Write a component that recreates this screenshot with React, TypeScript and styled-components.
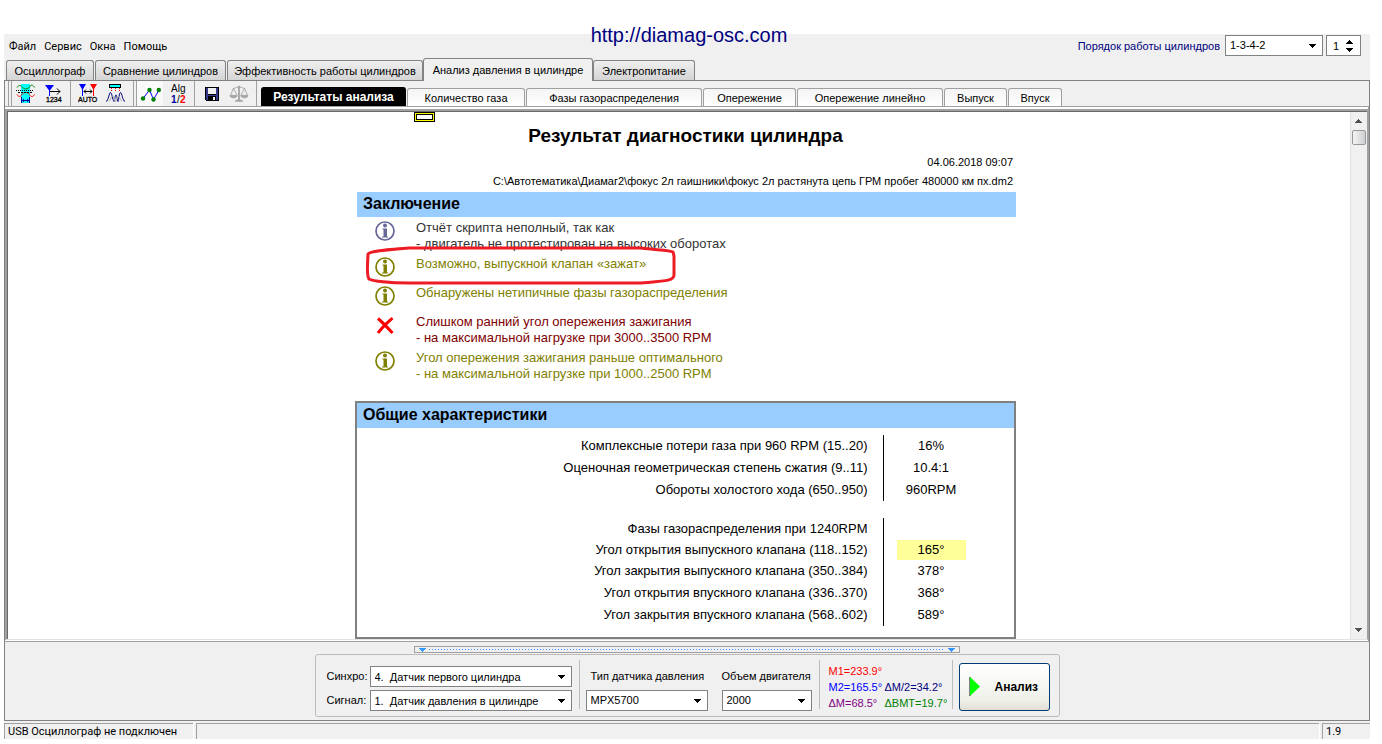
import React from "react";
import styled, { createGlobalStyle, css } from "styled-components";

const SANS = `"Liberation Sans", Arial, sans-serif`;
const UI = `Roboto, sans-serif`;

const GlobalStyle = createGlobalStyle`
  *, *::before, *::after { box-sizing: border-box; }
  body { margin: 0; background: #fff; color: #000; font-family: ${SANS}; font-size: 11px; }
  button, select, input { font: inherit; color: inherit; }
  button { cursor: pointer; }
  svg { display: block; flex: none; }
`;

const Page = styled.div`
  position: relative;
  min-height: 100vh;
  display: flex;
  flex-direction: column;
  padding: 34px 12px 5px 4px;
`;

const SiteLink = styled.a`
  position: absolute;
  top: 24px;
  left: 0;
  right: 4px;
  margin: 0 auto;
  width: fit-content;
  font-size: 20px;
  line-height: 22px;
  color: #000080;
  text-decoration: none;
`;

const Window = styled.div`
  flex: 1;
  display: flex;
  flex-direction: column;
  background: #f0f0f0;
`;

const TopRow = styled.header`
  display: flex;
  justify-content: space-between;
  height: 24px;
  padding: 0 9px 0 5px;
`;

const Menu = styled.nav`
  display: flex;
  gap: 8px;
  font-family: ${UI};
  font-size: 11px;
  line-height: 26px;
`;

const MenuItem = styled.button`
  border: 0;
  padding: 0;
  background: none;
`;

const Order = styled.div`
  display: flex;
  gap: 3px;
  padding-top: 1px;
`;

const OrderLabel = styled.label`
  color: #000080;
  line-height: 22px;
  margin-right: 2px;
`;

const SelectBox = styled.div<{ $w: number }>`
  position: relative;
  width: ${(p) => p.$w}px;
  height: 21px;
  svg { position: absolute; right: 7px; top: 9px; pointer-events: none; }
`;

const NativeSelect = styled.select`
  appearance: none;
  display: block;
  width: 100%;
  height: 21px;
  padding: 0 18px 2px 4px;
  border: 1px solid #828282;
  border-radius: 0;
  background: #fff;
`;

const Spin = styled.div`
  display: flex;
  align-items: center;
  width: 35px;
  height: 21px;
  border: 1px solid #828282;
  background: #fff;
`;

const SpinInput = styled.input`
  width: 19px;
  height: 17px;
  padding: 0 0 0 6px;
  border: 0;
  background: none;
`;

const SpinArrows = styled.div`
  display: flex;
  flex-direction: column;
  gap: 4px;
`;

const SpinButton = styled.button`
  border: 0;
  padding: 0;
  background: none;
`;

const MainTabs = styled.div`
  display: flex;
  align-items: flex-end;
  height: 22px;
  padding-left: 2px;
`;

const MainTab = styled.button<{ $w: number; $active?: boolean }>`
  width: ${(p) => p.$w}px;
  height: 20px;
  padding: 0;
  border: 1px solid #828282;
  border-bottom: 0;
  border-radius: 3px 3px 0 0;
  background: linear-gradient(#f0f0f0, #d4d4d4);
  white-space: nowrap;
  margin-right: 1px;
  ${(p) =>
    p.$active &&
    css`
      position: relative;
      height: 23px;
      margin: 0 0 -1px -1px;
      background: #f0f0f0;
    `}
`;

const Panel = styled.main`
  flex: 1;
  display: flex;
  flex-direction: column;
  border: 1px solid #828282;
`;

const ToolRow = styled.div`
  display: flex;
  height: 25px;
`;

const Tools = styled.div`
  display: flex;
  align-items: center;
  width: 256px;
`;

const Divider = styled.i<{ $double?: boolean }>`
  flex: none;
  width: ${(p) => (p.$double ? 4 : 1)}px;
  height: 25px;
  border-left: 1px solid #a0a0a0;
  ${(p) => p.$double && "border-right: 1px solid #a0a0a0;"}
`;

const Space = styled.span<{ $w: number }>`
  flex: none;
  width: ${(p) => p.$w}px;
`;

const ToolButton = styled.button<{ $w: number; $on?: boolean }>`
  display: flex;
  flex: none;
  align-items: center;
  justify-content: center;
  width: ${(p) => p.$w}px;
  height: 25px;
  padding: 0;
  border: 0;
  background: ${(p) => (p.$on ? "#f9f9f9" : "none")};
`;

const SubTabs = styled.div`
  display: flex;
  align-items: flex-end;
  gap: 1px;
`;

const SubTab = styled.button<{ $w: number; $active?: boolean }>`
  width: ${(p) => p.$w}px;
  height: 18px;
  padding: 0;
  border: 1px solid #a0a0a0;
  border-bottom: 0;
  border-radius: 3px 3px 0 0;
  background: linear-gradient(#f4f4f4, #fff);
  white-space: nowrap;
  ${(p) =>
    p.$active &&
    css`
      height: 19px;
      border-color: #000;
      background: #000;
      color: #fff;
      font-size: 12px;
      font-weight: bold;
    `}
`;

const Sheet = styled.div`
  flex: 1;
  display: flex;
  flex-direction: column;
  border: 1px solid #a0a0a0;
  border-width: 1px 1px 1px 0;
  padding-top: 2px;
  background: #fff;
`;

const Viewport = styled.div`
  flex: 1;
  display: flex;
  border: 2px solid #a0a0a0;
  border-width: 2px 1px 1px 2px;
  border-bottom-color: #e3e3e3;
  box-shadow: inset 1px 1px 0 #696969;
  margin-bottom: 1px;
`;

const Scroll = styled.div`
  flex: 1;
  display: flex;
  justify-content: center;
  padding: 1px 0 0 14px;
`;

const ScrollBar = styled.div`
  display: flex;
  flex-direction: column;
  align-items: center;
  width: 17px;
  margin-top: 1px;
  background: #f0f0f0;
  border-left: 1px solid #e3e3e3;
`;

const ScrollArrow = styled.button`
  width: 16px;
  height: 18px;
  padding: 0 0 0 4px;
  border: 0;
  background: none;
`;

const Thumb = styled.div`
  width: 14px;
  height: 15px;
  margin-bottom: auto;
  border: 1px solid #979797;
  border-radius: 2px;
  background: linear-gradient(90deg, #f5f5f5, #cdcfd2);
`;

const Report = styled.article`
  position: relative;
  width: 661px;
`;

const Marker = styled.div`
  width: 21px;
  height: 10px;
  margin-left: 59px;
  border: 1px solid #000;
  background: #fff;
  box-shadow: inset 0 0 0 1px #ffff00, inset 0 0 0 2px #000;
`;

const Title = styled.h1`
  margin: 2px 0 6px;
  font-size: 19px;
  line-height: 24px;
  text-align: center;
`;

const Meta = styled.p`
  margin: 0 3px 3px 0;
  line-height: 16px;
  text-align: right;
`;

const SectionTitle = styled.h2`
  margin: 0;
  padding-left: 6px;
  background: #99ccff;
  font-size: 16px;
  line-height: 23px;
  height: 25px;
`;

const Conclusion = styled.section`
  padding-left: 2px;
`;

const Findings = styled.ul`
  display: flex;
  flex-direction: column;
  gap: 4px;
  margin: 3px 0 19px;
  padding: 0;
  list-style: none;
`;

const Finding = styled.li<{ $color: string }>`
  display: flex;
  gap: 21px;
  min-height: 25px;
  padding-left: 18px;
  color: ${(p) => p.$color};
  font-size: 13px;
  line-height: 16px;
  svg { margin-top: 1px; }
`;

const Outline = styled.svg`
  position: absolute;
  left: 10px;
  top: 134px;
  pointer-events: none;
`;

const General = styled.section`
  border: 2px solid #808080;
`;

const Params = styled.table`
  width: 100%;
  margin: 7px 0 11px;
  border-collapse: collapse;
  font-size: 13px;
`;

const ParamRow = styled.tr<{ $short?: boolean }>`
  height: ${(p) => (p.$short ? 20 : 22)}px;
`;

const SpacerRow = styled.tr`
  height: 17px;
`;

const ParamName = styled.th`
  padding: 0 15px 0 0;
  text-align: right;
  font-weight: normal;
  line-height: 20px;
`;

const ParamValue = styled.td`
  width: 131px;
  padding: 0 0 0 13px;
  border-left: 1px solid #000;
  line-height: 20px;
`;

const Value = styled.span<{ $mark?: boolean }>`
  display: block;
  width: 69px;
  min-height: 20px;
  text-align: center;
  background: ${(p) => (p.$mark ? "#ffff99" : "none")};
`;

const Bottom = styled.footer`
  display: flex;
  flex-direction: column;
  align-items: center;
  gap: 1px;
  padding: 4px 0 3px;
`;

const Splitter = styled.div`
  display: flex;
  align-items: center;
  gap: 3px;
  width: 546px;
  height: 7px;
  padding: 0 4px;
  border: 1px solid #a0a0a0;
`;

const Dots = styled.div`
  flex: 1;
  height: 1px;
  background: repeating-linear-gradient(90deg, #3399ff 0 1px, transparent 1px 3px);
`;

const Controls = styled.div`
  display: flex;
  height: 63px;
  padding: 5px 9px 0 11px;
  border: 1px solid #bcbcbc;
  border-radius: 3px;
`;

const Rule = styled.i`
  width: 1px;
  height: 49px;
  background: #bcbcbc;
`;

const Channels = styled.div`
  display: grid;
  grid-template-columns: 43px 202px;
  align-content: start;
  row-gap: 3px;
  padding: 6px 7px 0 0;
  line-height: 21px;
`;

const Field = styled.div`
  display: flex;
  flex-direction: column;
  gap: 3px;
  padding: 6px 0 0 6px;
  label { line-height: 21px; padding-left: 5px; white-space: nowrap; }
  & + & { padding: 6px 7px 0 14px; }
  & + & label { padding-left: 0; width: 90px; }
`;

const Readings = styled.dl`
  display: grid;
  grid-template-columns: 56px 67px;
  align-content: start;
  margin: 0;
  padding: 3px 0 0 9px;
  line-height: 16px;
`;

const Reading = styled.dd<{ $color: string; $wide?: boolean }>`
  margin: 0;
  color: ${(p) => p.$color};
  ${(p) => p.$wide && "grid-column: span 2;"}
`;

const RunButton = styled.button`
  display: flex;
  align-items: center;
  gap: 15px;
  width: 91px;
  height: 48px;
  margin: 3px 0 0 6px;
  padding: 0 0 0 9px;
  border: 1px solid #003c74;
  border-radius: 3px;
  background: linear-gradient(#fff, #f0f0ea 80%, #e0ddd3);
  font-size: 12px;
  font-weight: bold;
`;

const StatusBar = styled.div`
  display: flex;
  gap: 3px;
  margin-top: 2px;
  font-family: ${UI};
`;

const StatusCell = styled.div<{ $w?: number }>`
  flex: ${(p) => (p.$w ? `0 0 ${p.$w}px` : "1")};
  height: 16px;
  padding-left: 3px;
  border: 1px solid #a0a0a0;
  border-width: 1px 0 0 1px;
  box-shadow: 1px 0 0 #fff;
  line-height: 16px;
`;

const Down = ({ fill = "#000" }: { fill?: string }) => (
  <svg width="7" height="4" viewBox="0 0 7 4" shapeRendering="crispEdges">
    <path d="M0 0H7V1H6V2H5V3H4V4H3V3H2V2H1V1H0Z" fill={fill} />
  </svg>
);

const Up = ({ fill = "#000" }: { fill?: string }) => (
  <svg width="7" height="4" viewBox="0 0 7 4" shapeRendering="crispEdges">
    <path d="M0 4H7V3H6V2H5V1H4V0H3V1H2V2H1V3H0Z" fill={fill} />
  </svg>
);

const Combo = ({ id, w, value }: { id: string; w: number; value: string }) => (
  <SelectBox $w={w}>
    <NativeSelect id={id} defaultValue={value}>
      <option value={value}>{value}</option>
    </NativeSelect>
    <Down />
  </SelectBox>
);

const PhaseIcon = () => (
  <svg width="20" height="20" viewBox="0 0 20 20" fill="none">
    <rect x="5" y="0" width="9" height="19" fill="#00ffff" />
    <path d="M1 3.500C2.500 1 4.500 1 6 3S12 6 13.500 3 17 1 18.500 3.500" stroke="#008000" />
    <path d="M1 10.500C2.500 13 4.500 13 6 10.500S12 7.500 13.500 10.500 17 13 18.500 10.500" stroke="#ff0000" />
    <path d="M0 6.500H18" stroke="#000" strokeDasharray="1 1" shapeRendering="crispEdges" />
    <path d="M2 8.500H17" stroke="#000" strokeDasharray="2 1" shapeRendering="crispEdges" />
    <path d="M5 16.500H14M5.500 13V19M13.500 13V19" stroke="#0000a0" shapeRendering="crispEdges" />
    <path d="M6 16.500L8 14.500V18.500ZM13 16.500L11 14.500V18.500Z" fill="#0000a0" />
  </svg>
);

const tiny = { fontFamily: "Liberation Sans, sans-serif", fontSize: 7, stroke: "#000", strokeWidth: 0.3 };

const CountIcon = () => (
  <svg width="20" height="20" viewBox="0 0 20 20">
    <path d="M0 1H9L4.500 7Z" fill="#0000ff" />
    <path d="M4.500 4V12" stroke="#0000ff" />
    <path d="M5 7.500H15M12 4.500L15 7.500L12 10.500" fill="none" stroke="#000" />
    <text x="1" y="18" {...tiny}>1234</text>
  </svg>
);

const AutoIcon = () => (
  <svg width="20" height="20" viewBox="0 0 20 20">
    <path d="M1 0H8L4.500 6Z" fill="#0000ff" />
    <path d="M4.500 4V12" stroke="#0000ff" />
    <path d="M12 0H19L15.500 6Z" fill="#ff0000" />
    <path d="M15.500 4V12" stroke="#ff0000" />
    <path d="M6 7.500H14M8 5.500L6 7.500L8 9.500M12 5.500L14 7.500L12 9.500" fill="none" stroke="#000" />
    <text x="0" y="18" {...tiny}>АUТО</text>
  </svg>
);

const WaveIcon = () => (
  <svg width="20" height="20" viewBox="0 0 20 20" fill="none">
    <rect x="3.500" y="0.500" width="11" height="3" fill="#00ffff" stroke="#000" />
    <path d="M5.500 4V8M9.500 4V8M13.500 4V8" stroke="#ff0000" strokeDasharray="1 1" />
    <path d="M0 17.500C2.500 17 3 8.500 4.500 8.500S6.500 16 8 17.500C9 16 9 11 10 11S11 16 12 17.500C13 16 13 8.500 14.500 8.500S16.500 17 19 17.500" stroke="#000080" />
    <path d="M3 17.500C5 16 5 12 6.500 12S8 16 9.500 17.500C11 16 11 12 12.500 12S14 16 16 17.500" stroke="#b0b0b0" />
  </svg>
);

const GraphIcon = () => (
  <svg width="22" height="20" viewBox="0 0 22 20">
    <path d="M4 14.500L10.500 6L14.500 15.500L20 6" fill="none" stroke="#0000ff" />
    <g fill="#008000">
      <circle cx="4" cy="14.500" r="2.200" />
      <circle cx="10.500" cy="6" r="2.200" />
      <circle cx="14.500" cy="15.500" r="2.200" />
      <circle cx="19.800" cy="6" r="2.200" />
    </g>
  </svg>
);

const AlgIcon = () => (
  <svg width="18" height="22" viewBox="0 0 18 22" fontFamily="Liberation Sans, sans-serif" fontSize="10">
    <text x="1" y="9">Alg</text>
    <text x="1" y="20" fontWeight="bold" fill="#0000a0">1</text>
    <text x="7" y="20">/</text>
    <text x="10" y="20" fontWeight="bold" fill="#ff0000">2</text>
  </svg>
);

const DiskIcon = () => (
  <svg width="16" height="16" viewBox="0 0 16 16" shapeRendering="crispEdges">
    <path d="M1 1H15V15H2L1 14Z" fill="#000" />
    <path d="M2 2H4V9H12V2H14V14H2Z" fill="#3c3c8c" />
    <rect x="4" y="2" width="8" height="6" fill="#f0f0f0" />
    <rect x="4" y="10" width="8" height="4" fill="#000" />
    <rect x="9" y="11" width="2" height="3" fill="#f0f0f0" />
  </svg>
);

const ScalesIcon = () => (
  <svg width="20" height="20" viewBox="0 0 22 20" fill="none" stroke="#a4a4a4">
    <path d="M11 1V17" strokeWidth="2" />
    <path d="M4 4.500L9 2.500H13L18 4.500" />
    <path d="M5 4L1.500 11.500H9L5 4M17 4L13 11.500H20.500L17 4" />
    <path d="M1 12H9C8 15 2 15 1 12ZM13 12H21C20 15 14 15 13 12ZM7 18C7 16 15 16 15 18Z" fill="#a4a4a4" />
  </svg>
);

const InfoIcon = () => (
  <svg width="20" height="20" viewBox="0 0 20 20">
    <circle cx="10" cy="10" r="9" fill="#fff" stroke="currentColor" strokeWidth="1.700" />
    <circle cx="10" cy="4.500" r="2" fill="currentColor" />
    <path d="M7.500 7.500H12V15.500H13V16.500H7V15.500H8.500V8.500H7.500Z" fill="currentColor" />
  </svg>
);

const CrossIcon = () => (
  <svg width="20" height="20" viewBox="0 0 20 20">
    <path d="M3 3.500C7 7 12 12 17.500 18M17.500 3C13 7 8 11 3 18" fill="none" stroke="#ff0000" strokeWidth="3" />
  </svg>
);

const mainTabs: [string, number][] = [
  ["Осциллограф", 88],
  ["Сравнение цилиндров", 131],
  ["Эффективность работы цилиндров", 196],
  ["Анализ давления в цилиндре", 170],
  ["Электропитание", 102],
];

const subTabs: [string, number][] = [
  ["Результаты анализа", 145],
  ["Количество газа", 118],
  ["Фазы газораспределения", 176],
  ["Опережение", 93],
  ["Опережение линейно", 146],
  ["Выпуск", 63],
  ["Впуск", 54],
];

const findings = [
  { lines: ["Отчёт скрипта неполный, так как", "- двигатель не протестирован на высоких оборотах"], color: "#333333", icon: "#666699" },
  { lines: ["Возможно, выпускной клапан «зажат»"], color: "#808000" },
  { lines: ["Обнаружены нетипичные фазы газораспределения"], color: "#808000" },
  { lines: ["Слишком ранний угол опережения зажигания", "- на максимальной нагрузке при 3000..3500 RPM"], color: "#800000", error: true },
  { lines: ["Угол опережения зажигания раньше оптимального", "- на максимальной нагрузке при 1000..2500 RPM"], color: "#808000" },
];

const IconSlot = styled.span<{ $color?: string }>`
  color: ${(p) => p.$color ?? "inherit"};
`;

const idle = [
  ["Комплексные потери газа при 960 RPM (15..20)", "16%"],
  ["Оценочная геометрическая степень сжатия (9..11)", "10.4:1"],
  ["Обороты холостого хода (650..950)", "960RPM"],
];

const phases = [
  ["Фазы газораспределения при 1240RPM", ""],
  ["Угол открытия выпускного клапана (118..152)", "165°"],
  ["Угол закрытия выпускного клапана (350..384)", "378°"],
  ["Угол открытия впускного клапана (336..370)", "368°"],
  ["Угол закрытия впускного клапана (568..602)", "589°"],
];

const ParamRows = ({ rows, mark }: { rows: string[][]; mark?: number }) => (
  <>
    {rows.map(([name, value], i) => (
      <ParamRow key={name} $short={i === mark}>
        <ParamName scope="row">{name}</ParamName>
        <ParamValue>
          <Value $mark={i === mark}>{value}</Value>
        </ParamValue>
      </ParamRow>
    ))}
  </>
);

export default function App() {
  return (
    <>
      <GlobalStyle />
      <Page>
        <Window>
          <TopRow>
            <Menu>
              {["Файл", "Сервис", "Окна", "Помощь"].map((m) => (
                <MenuItem key={m}>{m}</MenuItem>
              ))}
            </Menu>
            <Order>
              <OrderLabel htmlFor="order">Порядок работы цилиндров</OrderLabel>
              <Combo id="order" w={98} value="1-3-4-2" />
              <Spin>
                <SpinInput aria-label="Номер цилиндра" defaultValue="1" />
                <SpinArrows>
                  <SpinButton aria-label="Больше"><Up /></SpinButton>
                  <SpinButton aria-label="Меньше"><Down /></SpinButton>
                </SpinArrows>
              </Spin>
            </Order>
          </TopRow>
          <MainTabs role="tablist">
            {mainTabs.map(([name, w], i) => (
              <MainTab key={name} role="tab" $w={w} $active={i === 3} aria-selected={i === 3}>
                {name}
              </MainTab>
            ))}
          </MainTabs>
          <Panel>
            <ToolRow>
              <Tools>
                <Space $w={3} />
                <Divider $double />
                <ToolButton $w={28} aria-label="Фазы"><PhaseIcon /></ToolButton>
                <ToolButton $w={30} aria-label="Нумерация"><CountIcon /></ToolButton>
                <Divider />
                <ToolButton $w={34} aria-label="Авто"><AutoIcon /></ToolButton>
                <ToolButton $w={22} aria-label="Волны"><WaveIcon /></ToolButton>
                <Space $w={6} />
                <Divider $double />
                <ToolButton $w={26} $on aria-label="График"><GraphIcon /></ToolButton>
                <ToolButton $w={31} aria-label="Алгоритм"><AlgIcon /></ToolButton>
                <Divider />
                <ToolButton $w={34} aria-label="Сохранить"><DiskIcon /></ToolButton>
                <ToolButton $w={20} aria-label="Сравнить"><ScalesIcon /></ToolButton>
                <Space $w={7} />
                <Divider />
              </Tools>
              <SubTabs role="tablist">
                {subTabs.map(([name, w], i) => (
                  <SubTab key={name} role="tab" $w={w} $active={i === 0} aria-selected={i === 0}>
                    {name}
                  </SubTab>
                ))}
              </SubTabs>
            </ToolRow>
            <Sheet>
              <Viewport>
                <Scroll>
                  <Report>
                    <Marker />
                    <Title>Результат диагностики цилиндра</Title>
                    <Meta>04.06.2018 09:07</Meta>
                    <Meta>C:\Автотематика\Диамаг2\фокус 2л гаишники\фокус 2л растянута цепь ГРМ пробег 480000 км пх.dm2</Meta>
                    <Conclusion>
                      <SectionTitle>Заключение</SectionTitle>
                      <Findings>
                        {findings.map((f) => (
                          <Finding key={f.lines[0]} $color={f.color}>
                            <IconSlot $color={f.icon}>{f.error ? <CrossIcon /> : <InfoIcon />}</IconSlot>
                            <div>
                              {f.lines.map((l) => (
                                <div key={l}>{l}</div>
                              ))}
                            </div>
                          </Finding>
                        ))}
                      </Findings>
                    </Conclusion>
                    <Outline width="312" height="40" viewBox="0 0 312 40" fill="none" stroke="#ed1c24" strokeWidth="3">
                      <path d="M3 8C5 5 18 4 44 2H276C292 4 305 4 308 6L309 10V29C309 35 300 35 276 37H44C24 37 8 35 4 33C1 29 3 14 3 8Z" />
                    </Outline>
                    <General>
                      <SectionTitle>Общие характеристики</SectionTitle>
                      <Params>
                        <tbody>
                          <ParamRows rows={idle} />
                          <SpacerRow><td colSpan={2} /></SpacerRow>
                          <ParamRows rows={phases} mark={1} />
                        </tbody>
                      </Params>
                    </General>
                  </Report>
                </Scroll>
                <ScrollBar>
                  <ScrollArrow aria-label="Вверх"><Up fill="#505050" /></ScrollArrow>
                  <Thumb />
                  <ScrollArrow aria-label="Вниз"><Down fill="#505050" /></ScrollArrow>
                </ScrollBar>
              </Viewport>
            </Sheet>
            <Bottom>
              <Splitter>
                <Down fill="#3399ff" />
                <Dots />
                <Down fill="#3399ff" />
              </Splitter>
              <Controls>
                <Channels>
                  <label htmlFor="sync">Синхро:</label>
                  <Combo id="sync" w={202} value={"4.\u00a0 Датчик первого цилиндра"} />
                  <label htmlFor="signal">Сигнал:</label>
                  <Combo id="signal" w={202} value={"1.\u00a0 Датчик давления в цилиндре"} />
                </Channels>
                <Rule />
                <Field>
                  <label htmlFor="sensor">Тип датчика давления</label>
                  <Combo id="sensor" w={122} value="MPX5700" />
                </Field>
                <Field>
                  <label htmlFor="volume">Объем двигателя</label>
                  <Combo id="volume" w={90} value="2000" />
                </Field>
                <Rule />
                <Readings>
                  <Reading $color="#ff0000" $wide>M1=233.9°</Reading>
                  <Reading $color="#0000ff">M2=165.5°</Reading>
                  <Reading $color="#000080">ΔM/2=34.2°</Reading>
                  <Reading $color="#800080">ΔM=68.5°</Reading>
                  <Reading $color="#008000">ΔBMT=19.7°</Reading>
                </Readings>
                <Rule />
                <RunButton>
                  <svg width="11" height="20" viewBox="0 0 11 20">
                    <path d="M1 0V19" stroke="#808080" strokeWidth="2" />
                    <path d="M1 0L11 9.500L1 19Z" fill="#00ff00" />
                  </svg>
                  Анализ
                </RunButton>
              </Controls>
            </Bottom>
          </Panel>
          <StatusBar>
            <StatusCell $w={189}>USB Осциллограф не подключен</StatusCell>
            <StatusCell />
            <StatusCell $w={48}>1.9</StatusCell>
          </StatusBar>
        </Window>
        <SiteLink href="http://diamag-osc.com">http://diamag-osc.com</SiteLink>
      </Page>
    </>
  );
}
